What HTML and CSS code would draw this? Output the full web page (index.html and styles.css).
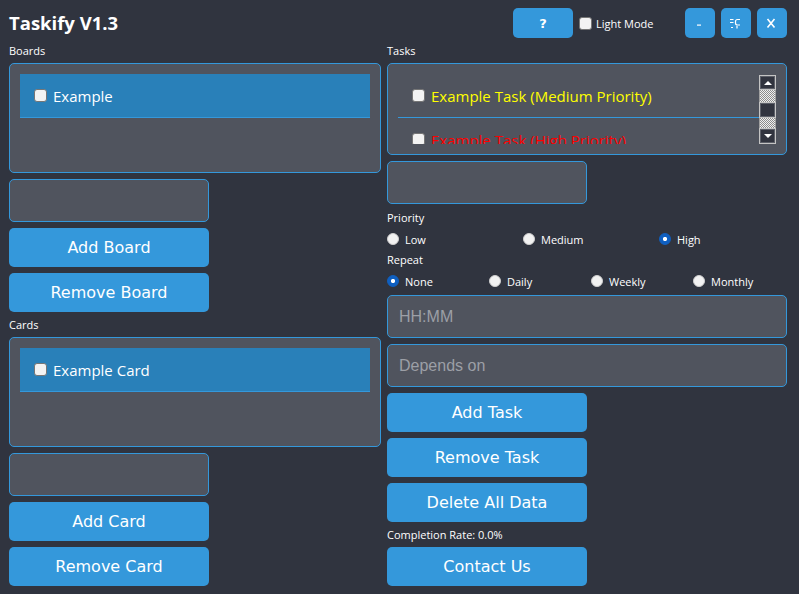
FILE: index.html
```html
<!DOCTYPE html>
<html lang="en">
<head>
<meta charset="utf-8">
<title>Taskify V1.3</title>
<link rel="stylesheet" href="styles.css">
</head>
<body>
<div class="app">
  <header class="header">
    <h1 class="title">Taskify V1.3</h1>
    <div class="controls">
      <button class="btn help">?</button>
      <label class="light"><input type="checkbox" class="check"><span>Light Mode</span></label>
      <button class="btn win" aria-label="Minimize">
        <svg width="30" height="30" viewBox="0 0 30 30"><rect x="12" y="16.5" width="4" height="1.2" fill="#fff"/></svg>
      </button>
      <button class="btn win" aria-label="Maximize">
        <svg width="30" height="30" viewBox="0 0 30 30" fill="none" stroke="#fff" stroke-width="1.2">
          <path d="M9 11.5h3.5M9 14.5h3.5M10 19.5h2"/>
          <path d="M19 11.5h-2.5q-2 0 -2 2v1.5q0 2 2 2h2.5"/>
          <path d="M16 18v2.5"/>
        </svg>
      </button>
      <button class="btn win" aria-label="Close">
        <svg width="30" height="30" viewBox="0 0 30 30" fill="none" stroke="#fff" stroke-width="1.6">
          <path d="M10.5 11l7 8.5M17.5 11l-7 8.5"/>
        </svg>
      </button>
    </div>
  </header>

  <main class="main">
    <section class="col">
      <div class="label">Boards</div>
      <div class="listbox">
        <div class="row selected"><input type="checkbox" class="check"><span>Example</span></div>
      </div>
      <input class="entry short" type="text">
      <button class="btn action">Add Board</button>
      <button class="btn action">Remove Board</button>

      <div class="label">Cards</div>
      <div class="listbox">
        <div class="row selected"><input type="checkbox" class="check"><span>Example Card</span></div>
      </div>
      <input class="entry short" type="text">
      <button class="btn action">Add Card</button>
      <button class="btn action">Remove Card</button>
    </section>

    <section class="col">
      <div class="label">Tasks</div>
      <div class="listbox tasks">
        <div class="task-rows">
          <div class="row sep"><input type="checkbox" class="check"><span class="medium">Example Task (Medium Priority)</span></div>
          <div class="row"><input type="checkbox" class="check"><span class="high">Example Task (High Priority)</span></div>
        </div>
        <div class="scrollbar">
          <div class="sb-btn up"></div>
          <div class="sb-track t1"></div>
          <div class="sb-thumb"></div>
          <div class="sb-track t2"></div>
          <div class="sb-btn down"></div>
        </div>
      </div>
      <input class="entry short" type="text">

      <div class="label tight">Priority</div>
      <div class="radios three tight">
        <label class="opt"><input type="radio" name="prio" class="radio"><span>Low</span></label>
        <label class="opt"><input type="radio" name="prio" class="radio"><span>Medium</span></label>
        <label class="opt"><input type="radio" name="prio" class="radio" checked><span>High</span></label>
      </div>

      <div class="label">Repeat</div>
      <div class="radios four tight">
        <label class="opt"><input type="radio" name="rep" class="radio" checked><span>None</span></label>
        <label class="opt"><input type="radio" name="rep" class="radio"><span>Daily</span></label>
        <label class="opt"><input type="radio" name="rep" class="radio"><span>Weekly</span></label>
        <label class="opt"><input type="radio" name="rep" class="radio"><span>Monthly</span></label>
      </div>

      <input class="entry" type="text" placeholder="HH:MM">
      <input class="entry" type="text" placeholder="Depends on">
      <button class="btn action">Add Task</button>
      <button class="btn action">Remove Task</button>
      <button class="btn action">Delete All Data</button>
      <div class="label">Completion Rate: 0.0%</div>
      <button class="btn action">Contact Us</button>
    </section>
  </main>
</div>
</body>
</html>
```

FILE: styles.css
```css
* { box-sizing: border-box; }

html, body {
  margin: 0;
  padding: 0;
  background: #30343f;
  width: 799px;
  height: 594px;
  overflow: hidden;
  color: #ffffff;
  font-family: "Open Sans", "DejaVu Sans", sans-serif;
}

.app {
  padding: 8px 12px 0 9px;
}

.header {
  height: 30px;
  display: flex;
  align-items: center;
  justify-content: space-between;
}

.title {
  margin: 0;
  font-family: "Open Sans", sans-serif;
  font-weight: 700;
  font-size: 18.5px;
  line-height: 30px;
  letter-spacing: 0;
}

.controls {
  display: flex;
  align-items: center;
  gap: 6px;
  height: 30px;
}

.btn {
  border: none;
  margin: 0;
  padding: 0;
  background: #3498db;
  color: #ffffff;
  border-radius: 5px;
  font-family: "DejaVu Sans", sans-serif;
  font-size: 16px;
  cursor: pointer;
  display: flex;
  align-items: center;
  justify-content: center;
}

.help {
  width: 60px;
  height: 30px;
  font-weight: 700;
  font-size: 13px;
}

.win {
  width: 30px;
  height: 30px;
}

.win svg { display: block; }

.light {
  width: 100px;
  display: flex;
  align-items: center;
  gap: 4px;
  font-size: 11px;
}

.check {
  -webkit-appearance: none;
  appearance: none;
  margin: 0;
  width: 13px;
  height: 13px;
  flex: 0 0 13px;
  background: #f3f3f3;
  border: 1px solid #767676;
  border-radius: 3px;
}

.main {
  margin-top: 6px;
  display: grid;
  grid-template-columns: 372px 400px;
  column-gap: 6px;
  align-items: start;
}

.col {
  display: flex;
  flex-direction: column;
  gap: 6px;
}

.label {
  font-size: 11px;
  line-height: 13px;
  height: 13px;
  white-space: nowrap;
}

.tight { margin-top: 1px; }

.listbox {
  height: 110px;
  background: #50545e;
  border: 1px solid #3498db;
  border-radius: 5px;
  padding: 10px;
}

.row {
  height: 44px;
  display: flex;
  align-items: center;
  gap: 6px;
  padding-left: 14px;
  padding-bottom: 1px;
  font-size: 15px;
  white-space: nowrap;
  flex: 0 0 auto;
}

.row.selected {
  background: #2980b9;
  border-bottom: 1px solid #3498db;
  padding-bottom: 0;
}

.row.sep {
  border-bottom: 1px solid #3498db;
  padding-bottom: 0;
}

.medium { color: #ffff00; }
.high { color: #ff0000; }

.tasks {
  height: 92px;
  display: flex;
}

.task-rows {
  flex: 1;
  height: 70px;
  overflow: hidden;
  display: flex;
  flex-direction: column;
}

.scrollbar {
  width: 17px;
  margin-top: 1px;
  display: flex;
  flex-direction: column;
}

.sb-btn, .sb-thumb {
  background: #31343f;
  border: 1px solid #c4c4c4;
  box-shadow: inset 0 0 0 1px #5c5f68;
  display: flex;
  align-items: center;
  justify-content: center;
}

.sb-btn { height: 15px; }
.sb-btn.down { height: 16px; }
.sb-thumb { height: 16px; }

.sb-btn::before {
  content: "";
  width: 0;
  height: 0;
  border-left: 4px solid transparent;
  border-right: 4px solid transparent;
}

.up::before { border-bottom: 4px solid #ffffff; }
.down::before { border-top: 4px solid #ffffff; }

.sb-track {
  background: repeating-conic-gradient(#f0f0f0 0 25%, #8c8c8c 0 50%) 0 0 / 2px 2px;
  border-left: 1px solid #a0a0a0;
  border-right: 1px solid #a0a0a0;
}

.t1 { height: 12px; }
.t2 { height: 10px; }

.entry {
  height: 43px;
  margin: 0;
  background: #50545e;
  border: 1px solid #3498db;
  border-radius: 5px;
  padding: 0 11px;
  color: #ffffff;
  font-family: "Liberation Sans", sans-serif;
  font-size: 16px;
  outline: none;
  width: 100%;
}

.entry.short { width: 200px; }

.entry::placeholder { color: #9c9fa6; }

.action {
  width: 200px;
  height: 39px;
}

.radios {
  display: grid;
  height: 16px;
  align-items: center;
  font-size: 11px;
}

.radios.three { grid-template-columns: 136px 136px 1fr; }
.radios.four { grid-template-columns: 102px 102px 102px 1fr; }

.opt {
  display: flex;
  align-items: center;
  gap: 6px;
  white-space: nowrap;
}

.radio {
  -webkit-appearance: none;
  appearance: none;
  margin: 0;
  width: 12px;
  height: 12px;
  flex: 0 0 12px;
  border-radius: 50%;
  background: #f2f2f2;
  border: 1px solid #cfcfcf;
}

.radio:checked {
  border-color: #0f5fc0;
  background: radial-gradient(circle, #ffffff 0 1.8px, #0f5fc0 2.4px);
}
```
